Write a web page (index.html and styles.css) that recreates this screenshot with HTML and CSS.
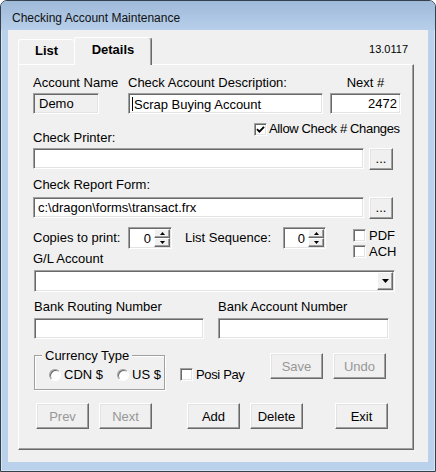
FILE: index.html
```html
<!DOCTYPE html>
<html>
<head>
<meta charset="utf-8">
<title>Checking Account Maintenance</title>
<link rel="stylesheet" href="styles.css">
</head>
<body>
<div class="window">
  <div class="titlebar"><span class="title">Checking Account Maintenance</span></div>
  <div class="client">
    <div class="tabstrip">
      <div class="tab tab-list">List</div>
      <div class="tab tab-details">Details</div>
      <div class="version">13.0117</div>
    </div>
    <div class="panel">
      <div class="row top-row">
        <div class="field f-name"><span class="lbl">Account Name</span><div class="box disabled">Demo</div></div>
        <div class="field f-desc"><span class="lbl">Check Account Description:</span><div class="box caret-box"><span class="caret"></span>Scrap Buying Account</div></div>
        <div class="field f-next"><span class="lbl center">Next #</span><div class="box right">2472</div></div>
      </div>
      <div class="row printer-head">
        <span class="lbl printer-lbl">Check Printer:</span>
        <div class="check allow"><span class="cb"><svg width="9" height="9" viewBox="0 0 9 9"><path d="M1 4.2 L3.4 6.6 L8 1.8" fill="none" stroke="#000" stroke-width="1.9"/></svg></span><span class="tight">Allow Check # Changes</span></div>
      </div>
      <div class="row file-row r-printer"><div class="box file"></div><div class="btn dots">...</div></div>
      <div class="lbl report-lbl">Check Report Form:</div>
      <div class="row file-row r-report"><div class="box file report">c:\dragon\forms\transact.frx</div><div class="btn dots">...</div></div>
      <div class="row copies-row">
        <span class="lbl copies-lbl">Copies to print:</span>
        <div class="spin s1"><span class="val">0</span><span class="spin-btns"><span class="sb"><svg width="5" height="3" viewBox="0 0 5 3"><path d="M0 3H5L2.5 0Z"/></svg></span><span class="sb"><svg width="5" height="3" viewBox="0 0 5 3"><path d="M0 0H5L2.5 3Z"/></svg></span></span></div>
        <span class="lbl seq-lbl">List Sequence:</span>
        <div class="spin s2"><span class="val">0</span><span class="spin-btns"><span class="sb"><svg width="5" height="3" viewBox="0 0 5 3"><path d="M0 3H5L2.5 0Z"/></svg></span><span class="sb"><svg width="5" height="3" viewBox="0 0 5 3"><path d="M0 0H5L2.5 3Z"/></svg></span></span></div>
        <div class="checkstack">
          <div class="check small"><span class="cb"></span><span>PDF</span></div>
          <div class="check small"><span class="cb"></span><span>ACH</span></div>
        </div>
      </div>
      <div class="lbl gl-lbl">G/L Account</div>
      <div class="combo"><span class="combo-btn"><svg width="7" height="4" viewBox="0 0 7 4"><path d="M0 0H7L3.5 4Z"/></svg></span></div>
      <div class="row bank-row">
        <div class="field f-routing"><span class="lbl">Bank Routing Number</span><div class="box"></div></div>
        <div class="field f-account"><span class="lbl">Bank Account Number</span><div class="box"></div></div>
      </div>
      <div class="row action-row">
        <fieldset class="group">
          <legend>Currency Type</legend>
          <div class="radios">
            <div class="radio r-cdn"><span class="rb"></span><span>CDN $</span></div>
            <div class="radio r-us"><span class="rb"></span><span>US $</span></div>
          </div>
        </fieldset>
        <div class="check posi"><span class="cb"></span><span class="tight">Posi Pay</span></div>
        <div class="btn off save">Save</div>
        <div class="btn off undo">Undo</div>
      </div>
      <div class="row nav-row">
        <div class="btn off prev">Prev</div>
        <div class="btn off next">Next</div>
        <div class="btn add">Add</div>
        <div class="btn del">Delete</div>
        <div class="btn exit">Exit</div>
      </div>
    </div>
  </div>
</div>
</body>
</html>
```

FILE: styles.css
```css
* { box-sizing: border-box; }
html, body { margin: 0; padding: 0; }
body {
  width: 436px;
  height: 472px;
  overflow: hidden;
  background: #ffffff;
  font-family: "Liberation Sans", Arial, sans-serif;
  font-size: 13px;
  line-height: 15px;
  color: #000;
}
.window {
  width: 436px;
  height: 472px;
  border: 1px solid #34404c;
  border-radius: 7px 7px 0 0;
  background: #b9d1ea;
  box-shadow: inset 0 0 0 1px rgba(255,255,255,0.4);
  display: flex;
  flex-direction: column;
  overflow: hidden;
}
.titlebar {
  flex: none;
  height: 29px;
  padding: 10px 0 0 11px;
  background: linear-gradient(#9fb9d9, #b7cfea);
  font-size: 12px;
  line-height: 15px;
  color: #111;
}
.client {
  flex: none;
  height: 432px;
  margin: 0 7px;
  background: #f0f0f0;
}
.tabstrip {
  display: flex;
  align-items: flex-end;
  height: 34px;
  padding: 7px 0 0 10px;
}
.tab {
  background: #f0f0f0;
  font-weight: bold;
  text-align: center;
  border-top: 1px solid #fff;
  border-left: 1px solid #fff;
  border-radius: 3px 3px 0 0;
}
.tab-list {
  width: 56px;
  height: 25px;
  padding-top: 3px;
}
.tab-details {
  position: relative;
  z-index: 1;
  width: 78px;
  height: 28px;
  margin-bottom: -1px;
  padding-top: 4px;
  border-right: 1px solid #696969;
  box-shadow: inset -1px 0 0 #a0a0a0;
}
.version {
  align-self: flex-start;
  margin-left: auto;
  margin-right: 20px;
  margin-top: 6px;
  font-size: 11px;
  line-height: 13px;
}
.panel {
  margin-left: 10px;
  width: 396px;
  height: 386px;
  border-top: 1px solid #fff;
  border-left: 1px solid #fff;
  border-right: 1px solid #696969;
  border-bottom: 1px solid #696969;
  box-shadow: inset -1px -1px 0 #a0a0a0;
  padding: 10px 12px 0 14px;
}
.row { display: flex; align-items: flex-start; }
.lbl { display: block; white-space: nowrap; }
.center { text-align: center; }
.tight { letter-spacing: -0.35px; }
.field { display: flex; flex-direction: column; gap: 3px; }

.box {
  height: 21px;
  background: #fff;
  border: 1px solid;
  border-color: #a0a0a0 #fff #fff #a0a0a0;
  box-shadow: inset 1px 1px 0 #696969, inset -1px -1px 0 #e3e3e3;
  padding: 1px 5px 0;
  line-height: 17px;
  white-space: nowrap;
}
.box.disabled { background: #f0f0f0; }
.box.right { text-align: right; padding-right: 3px; }
.caret-box { padding-left: 3px; display: flex; align-items: center; }
.caret { display: inline-block; width: 1px; height: 14px; background: #000; margin-right: 1px; }

.f-name { width: 66px; margin-right: 29px; }
.f-desc { width: 195px; margin-right: 7px; }
.f-next { width: 71px; }

.printer-head { margin-top: 7px; height: 24px; }
.printer-lbl { margin-top: 9px; }
.check { display: flex; align-items: flex-start; white-space: nowrap; }
.cb {
  flex: none;
  width: 13px;
  height: 13px;
  background: #fff;
  border: 1px solid;
  border-color: #a0a0a0 #fff #fff #a0a0a0;
  box-shadow: inset 1px 1px 0 #696969, inset -1px -1px 0 #e3e3e3;
  display: flex;
  align-items: center;
  justify-content: center;
  margin-top: 2px;
  margin-right: 2px;
}
.allow { margin-left: auto; width: 147px; }

.file-row { margin-top: 3px; gap: 5px; }
.box.file { width: 331px; }
.box.report { padding-left: 4px; }
.btn {
  flex: none;
  background: #f0f0f0;
  border: 1px solid;
  border-color: #fff #696969 #696969 #fff;
  box-shadow: inset -1px -1px 0 #a0a0a0, inset 1px 1px 0 #e3e3e3;
  display: flex;
  align-items: center;
  justify-content: center;
  white-space: nowrap;
}
.dots { width: 24px; height: 22px; padding-bottom: 1px; }
.report-lbl { margin-top: 7px; }
.r-report { margin-top: 5px; }

.copies-row { margin-top: 8px; height: 22px; }
.copies-lbl { width: 95px; margin-top: 3px; }
.seq-lbl { width: 98px; margin-left: 13px; margin-top: 3px; }
.spin {
  flex: none;
  height: 22px;
  background: #fff;
  border: 1px solid;
  border-color: #a0a0a0 #fff #fff #a0a0a0;
  box-shadow: inset 1px 1px 0 #696969, inset -1px -1px 0 #e3e3e3;
  padding: 1px 1px 1px 0;
  display: flex;
  justify-content: flex-end;
}
.s1 { width: 44px; }
.s2 { width: 43px; }
.val { padding-top: 2px; margin-right: 3px; }
.spin-btns { display: flex; flex-direction: column; width: 16px; }
.sb {
  flex: 1;
  background: #f0f0f0;
  border: 1px solid;
  border-color: #fff #696969 #696969 #fff;
  box-shadow: inset -1px -1px 0 #a0a0a0;
  display: flex;
  align-items: center;
  justify-content: center;
}
.sb svg { display: block; }
.checkstack { margin-left: 27px; margin-top: 1px; display: flex; flex-direction: column; }
.check.small { height: 16px; }
.check.small .cb { margin-right: 3px; margin-top: 1px; }

.gl-lbl { margin-top: 2px; }
.combo {
  margin-top: 4px;
  margin-left: 1px;
  width: 361px;
  height: 22px;
  background: #fff;
  border: 1px solid;
  border-color: #a0a0a0 #fff #fff #a0a0a0;
  box-shadow: inset 1px 1px 0 #696969, inset -1px -1px 0 #e3e3e3;
  padding: 1px;
  display: flex;
  justify-content: flex-end;
}
.combo-btn {
  width: 16px;
  height: 18px;
  background: #f0f0f0;
  border: 1px solid;
  border-color: #fff #696969 #696969 #fff;
  box-shadow: inset -1px -1px 0 #a0a0a0;
  display: flex;
  align-items: center;
  justify-content: center;
}
.combo-btn svg { display: block; }

.bank-row { margin-top: 7px; }
.bank-row .field { gap: 4px; }
.f-routing { width: 170px; margin-left: 1px; margin-right: 14px; }
.f-account { width: 171px; }

.action-row { margin-top: 9px; }
.group {
  margin: 0 0 0 1px;
  width: 131px;
  padding: 4px 0 7px 0;
  border: 1px solid #a0a0a0;
  box-shadow: inset 1px 1px 0 #fff, 1px 1px 0 #fff;
  min-width: 0;
}
.group legend {
  margin-left: 7px;
  padding: 0 3px;
  background: #f0f0f0;
  line-height: 15px;
}
.radios { display: flex; }
.radio { display: flex; align-items: flex-start; white-space: nowrap; }
.r-cdn { margin-left: 14px; width: 68px; }
.rb {
  flex: none;
  width: 12px;
  height: 12px;
  border-radius: 50%;
  background: #fff;
  border: 1px solid;
  border-color: #a0a0a0 #fff #fff #a0a0a0;
  box-shadow: inset 1px 1px 0 #696969;
  margin-top: 2px;
  margin-right: 3px;
}
.posi { margin-left: 15px; width: 90px; margin-top: 19px; }
.posi .cb { margin-top: 1px; margin-right: 3px; }
.save, .undo { width: 53px; height: 26px; margin-top: 5px; }
.undo { margin-left: 10px; }
.off { color: #979797; }

.nav-row { margin-top: 13px; }
.nav-row .btn { width: 53px; height: 26px; }
.prev { margin-left: 3px; }
.next { margin-left: 10px; }
.add { margin-left: 35px; }
.del { margin-left: 10px; }
.exit { margin-left: 32px; }
```
